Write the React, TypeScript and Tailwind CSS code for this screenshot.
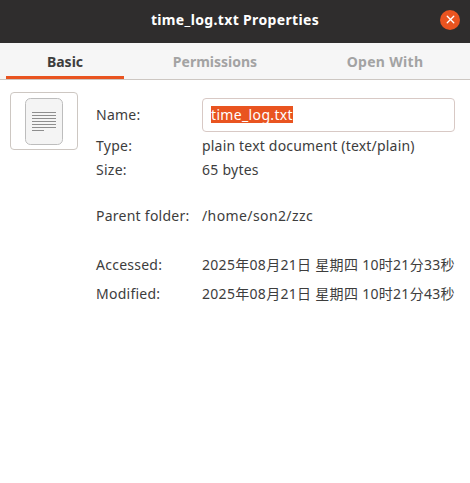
import React from "react";
import { X } from "lucide-react";

const font = "font-['Noto_Sans','Noto_Sans_CJK_SC',sans-serif]";

const Row: React.FC<{ label: string; value: string; className?: string; valueClass?: string }> = ({
  label,
  value,
  className,
  valueClass,
}) => (
  <div className={`flex h-[24px] items-center text-[14px] tracking-[0.25px] text-[#3d3d3d] ${className ?? ""}`}>
    <span className="w-[106px] shrink-0">{label}</span>
    <span className={`whitespace-nowrap ${valueClass ?? ""}`}>{value}</span>
  </div>
);

const FileIcon = () => (
  <svg width="38" height="48" viewBox="0 0 38 48">
    <rect x="0.5" y="1.5" width="37" height="46" rx="5" fill="#f4f4f4" stroke="#bdbdbd" />
    <g stroke="#8e8e8e" strokeWidth="1">
      <path d="M7 15.5h24" />
      <path d="M7 18.5h24" />
      <path d="M7 21.5h24" />
      <path d="M7 24.5h24" />
      <path d="M7 27.5h24" />
      <path d="M7 30.5h24" />
      <path d="M7 33.5h12" />
    </g>
  </svg>
);

const App: React.FC = () => {
  return (
    <div className={`flex h-[483px] w-[470px] flex-col overflow-hidden bg-white ${font}`}>
      <div className="flex h-[43px] items-center justify-between bg-[#2f2d2d] pb-[4px] pl-[30px] pr-[10px]">
        <div className="flex-1 text-center text-[14px] font-bold tracking-[0.35px] text-white">time_log.txt Properties</div>
        <button className="flex h-5 w-5 items-center justify-center rounded-full bg-[#e95420] text-white">
          <X size={13} strokeWidth={2.5} />
        </button>
      </div>

      <div className="flex h-[37px] border-b border-[#cdc7c2] bg-[#f6f6f6] px-[6px] text-[14px] font-bold">
        <div className="flex w-[118px] items-center justify-center border-b-[3px] border-[#e95420] pt-[3px] text-[#3d3d3d]">
          Basic
        </div>
        <div className="flex w-[182px] items-center justify-center text-[#a3a3a3]">Permissions</div>
        <div className="flex w-[158px] items-center justify-center tracking-[0.3px] text-[#a3a3a3]">Open With</div>
      </div>

      <div className="flex items-start pl-[10px] pt-[12px]">
        <div className="flex h-[58px] w-[68px] shrink-0 items-center justify-center rounded-[4px] border border-[#cdc7c2] bg-white">
          <FileIcon />
        </div>
        <div className="ml-[18px] flex-1 pt-[6px]">
          <div className="flex h-[34px] items-center text-[14px] tracking-[0.25px] text-[#3d3d3d]">
            <span className="w-[106px] shrink-0 pb-[2px]">Name:</span>
            <div className="flex h-[34px] w-[253px] items-center rounded-[4px] border border-[#d8c9c5] bg-white pb-[1px] pl-[8px]">
              <span className="bg-[#e95420] leading-[17px] tracking-[0.35px] text-white">time_log.txt</span>
            </div>
          </div>
          <Row label="Type:" value="plain text document (text/plain)" className="mt-[1px]" valueClass="tracking-[0.19px]" />
          <Row label="Size:" value="65 bytes" />
          <Row label="Parent folder:" value="/home/son2/zzc" className="mt-[22px]" valueClass="tracking-[0.4px]" />
          <Row
            label="Accessed:"
            value="2025年08月21日 星期四 10时21分33秒"
            className="mt-[25px]"
            valueClass="tracking-[0.3px]"
          />
          <Row
            label="Modified:"
            value="2025年08月21日 星期四 10时21分43秒"
            className="mt-[5px]"
            valueClass="tracking-[0.3px]"
          />
        </div>
      </div>
    </div>
  );
};

export default App;
